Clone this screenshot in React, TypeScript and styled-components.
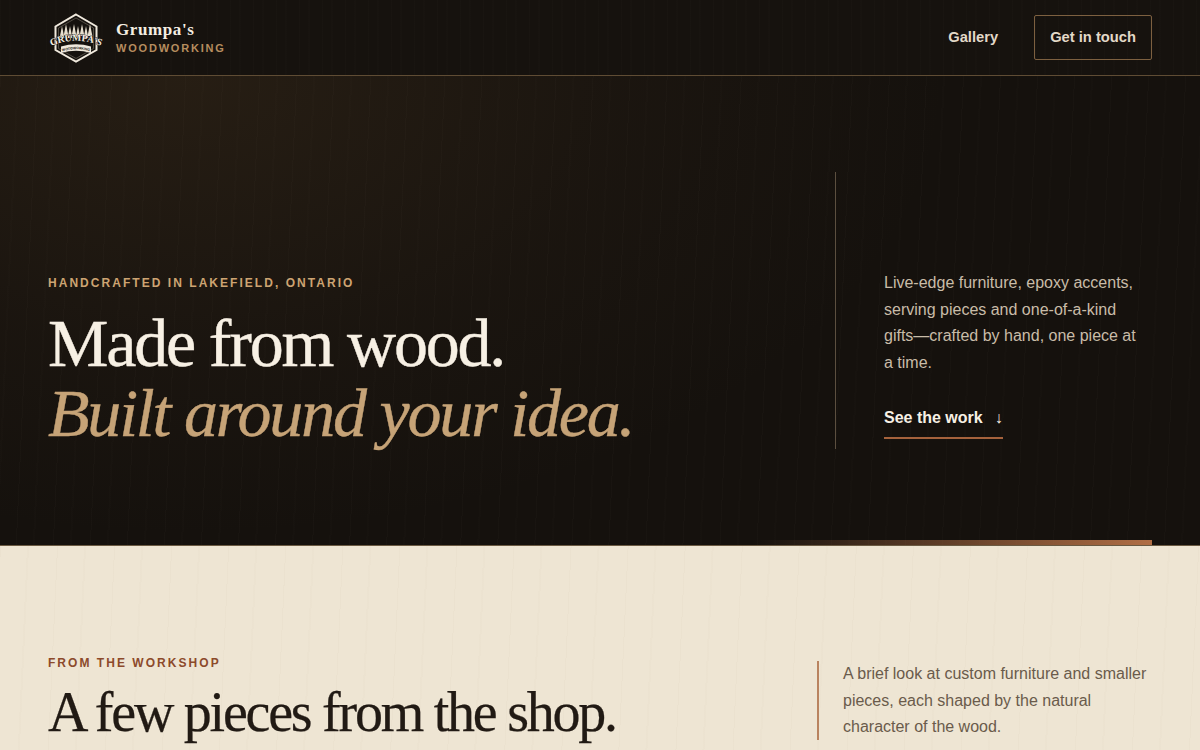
import React from "react";
import styled, { createGlobalStyle } from "styled-components";

const GlobalStyle = createGlobalStyle`
  html, body { margin: 0; padding: 0; background: #16120e; }
  body { font-family: "Liberation Sans", Arial, sans-serif; }
  * { box-sizing: border-box; }
`;

const Header = styled.header`
  position: relative;
  height: 76px;
  padding: 0 48px;
  display: flex;
  align-items: center;
  justify-content: space-between;
  background-color: #16120e;
  background-image:
    repeating-linear-gradient(90deg, rgba(255,240,215,0.01) 0 1px, transparent 1px 9px, rgba(255,240,215,0.007) 9px 11px, transparent 11px 23px);
  border-bottom: 1px solid #5f4c34;
`;

const Brand = styled.a`
  display: flex;
  align-items: center;
  gap: 12px;
`;

const BrandText = styled.div`
  display: flex;
  flex-direction: column;
  gap: 2px;
`;

const BrandName = styled.span`
  font-family: "Liberation Serif", "Times New Roman", serif;
  font-size: 17px;
  line-height: 20px;
  font-weight: 700;
  letter-spacing: 0.6px;
  color: #f5eee2;
`;

const BrandSub = styled.span`
  font-size: 11px;
  line-height: 13px;
  font-weight: 700;
  letter-spacing: 1.8px;
  color: #b68d5f;
`;

const Nav = styled.nav`
  display: flex;
  align-items: center;
  gap: 36px;
`;

const NavLink = styled.a`
  font-size: 14.72px;
  line-height: 17px;
  margin-bottom: 1px;
  font-weight: 700;
  color: #e3d9c8;
`;

const NavButton = styled.a`
  height: 45px;
  padding: 0 15px 1px;
  display: flex;
  align-items: center;
  font-size: 14.72px;
  font-weight: 700;
  color: #e3d9c8;
  border: 1px solid #7d6040;
  border-radius: 2px;
`;

const Hero = styled.section`
  position: relative;
  height: 470px;
  padding: 0 48px;
  display: grid;
  grid-template-columns: 1fr 317px;
  align-content: center;
  align-items: end;
  background-color: #15110d;
  background-image:
    radial-gradient(ellipse 760px 460px at 190px 0, rgba(125,92,52,0.17), rgba(110,80,50,0.06) 60%, transparent 100%),
    repeating-linear-gradient(92.6deg, rgba(255,240,215,0.014) 0 1px, transparent 1px 17px, rgba(255,240,215,0.009) 17px 19px, transparent 19px 37px);
  border-bottom: 1px solid #6b5a42;
`;

const HeroCopy = styled.div`
  padding-bottom: 1px;
  display: flex;
  flex-direction: column;
`;

const Eyebrow = styled.p<{ $tone: string }>`
  margin: 0;
  font-size: 12px;
  line-height: 14px;
  font-weight: 700;
  letter-spacing: 2.04px;
  text-transform: uppercase;
  color: ${(p) => p.$tone};
`;

const HeroTitle = styled.h1`
  margin: 18px 0 0;
  font-family: "Liberation Serif", "Times New Roman", serif;
  font-size: 68px;
  line-height: 70px;
  font-weight: 400;
  letter-spacing: -2.2px;
  color: #f7f0e4;
  -webkit-text-stroke: 0.4px currentColor;
`;

const TitleAccent = styled.em`
  display: block;
  font-style: italic;
  color: #c6a377;
`;

const HeroAside = styled.div`
  height: 277px;
  padding: 0 12px 10px 48px;
  border-left: 1px solid #5c4f3f;
  display: flex;
  flex-direction: column;
  align-items: flex-start;
  justify-content: flex-end;
`;

const HeroText = styled.p`
  margin: 0;
  font-size: 16px;
  line-height: 26.4px;
  color: #c9bca8;
`;

const WorkLink = styled.a`
  margin-top: 31.9px;
  padding-bottom: 9px;
  display: flex;
  gap: 12px;
  font-size: 16px;
  line-height: 20px;
  font-weight: 700;
  color: #f7f0e4;
  border-bottom: 2px solid #a5623c;
`;

const Arrow = styled.span`
  font-weight: 400;
`;

const HeroBar = styled.div`
  position: absolute;
  right: 48px;
  bottom: 0;
  width: 400px;
  height: 5px;
  background: linear-gradient(90deg, transparent, #b06e45);
`;

const Shop = styled.section`
  padding: 110px 48px 60px;
  display: grid;
  grid-template-columns: 1fr 335px;
  align-items: end;
  background-color: #eee5d3;
  background-image:
    repeating-linear-gradient(92.6deg, rgba(120,90,50,0.022) 0 1px, transparent 1px 27px, rgba(120,90,50,0.014) 27px 29px, transparent 29px 57px);
`;

const ShopHead = styled.div`
  display: flex;
  flex-direction: column;
`;

const ShopTitle = styled.h2`
  margin: 14px 0 0;
  font-family: "Liberation Serif", "Times New Roman", serif;
  font-size: 56px;
  line-height: 56px;
  font-weight: 400;
  letter-spacing: -2.24px;
  color: #211a14;
  -webkit-text-stroke: 0.25px currentColor;
`;

const ShopNote = styled.p`
  margin: 0 0 -0.4px;
  padding: 0 0 0 24px;
  font-size: 16px;
  line-height: 26.4px;
  color: #6a5b4b;
  border-left: 2px solid #b9835f;
`;

const Logo = () => (
  <svg width="56" height="50" viewBox="0 0 56 50" aria-hidden="true">
    <path d="M28 1.5 L48.5 13.5 L48.5 37 L28 48.5 L7.5 37 L7.5 13.5 Z" fill="#16120e" stroke="#f0e9dd" strokeWidth="2" />
    <path d="M28 5 L45.5 15 L45.5 35.5 L28 45.5 L10.5 35.5 L10.5 15 Z" fill="none" stroke="#8f8678" strokeWidth="0.5" />
    <g fill="#e6dece">
      {[14, 18, 22, 26, 30, 34, 38, 42].map((x, i) => (
        <path key={x} d={`M${x} ${i % 2 ? 11 : 13} l-2.4 12 h4.8 Z`} />
      ))}
    </g>
    <path d="M13 33.5 Q28 29 43 33.5 L43 40 Q28 35.5 13 40 Z" fill="#efe8dc" />
    <path id="logo-arc" d="M1 34 Q28 21.5 55 34" fill="none" />
    <path id="logo-arc-sub" d="M14 38.4 Q28 33.9 42 38.4" fill="none" />
    <text
      fontFamily="Liberation Serif, serif"
      fontSize="9.7"
      fontWeight="700"
      fill="#f5efe4"
      stroke="#16120e"
      strokeWidth="0.8"
      paintOrder="stroke"
      textAnchor="middle"
    >
      <textPath href="#logo-arc" startOffset="50%">
        GRUMPA'S
      </textPath>
    </text>
    <text fontFamily="Liberation Sans, sans-serif" fontSize="3.4" fontWeight="700" fill="#16120e" textAnchor="middle">
      <textPath href="#logo-arc-sub" startOffset="50%">
        WOODWORKING
      </textPath>
    </text>
  </svg>
);

export default function App() {
  return (
    <>
      <GlobalStyle />
      <Header>
        <Brand>
          <Logo />
          <BrandText>
            <BrandName>Grumpa's</BrandName>
            <BrandSub>WOODWORKING</BrandSub>
          </BrandText>
        </Brand>
        <Nav>
          <NavLink>Gallery</NavLink>
          <NavButton>Get in touch</NavButton>
        </Nav>
      </Header>
      <Hero>
        <HeroCopy>
          <Eyebrow $tone="#cda472">Handcrafted in Lakefield, Ontario</Eyebrow>
          <HeroTitle>
            Made from wood.
            <TitleAccent>Built around your idea.</TitleAccent>
          </HeroTitle>
        </HeroCopy>
        <HeroAside>
          <HeroText>
            Live-edge furniture, epoxy accents, serving pieces and one-of-a-kind gifts—crafted by hand, one piece at a time.
          </HeroText>
          <WorkLink>
            See the work <Arrow>↓</Arrow>
          </WorkLink>
        </HeroAside>
        <HeroBar />
      </Hero>
      <Shop>
        <ShopHead>
          <Eyebrow $tone="#8c4a2b">From the workshop</Eyebrow>
          <ShopTitle>A few pieces from the shop.</ShopTitle>
        </ShopHead>
        <ShopNote>
          A brief look at custom furniture and smaller pieces, each shaped by the natural character of the wood.
        </ShopNote>
      </Shop>
    </>
  );
}
